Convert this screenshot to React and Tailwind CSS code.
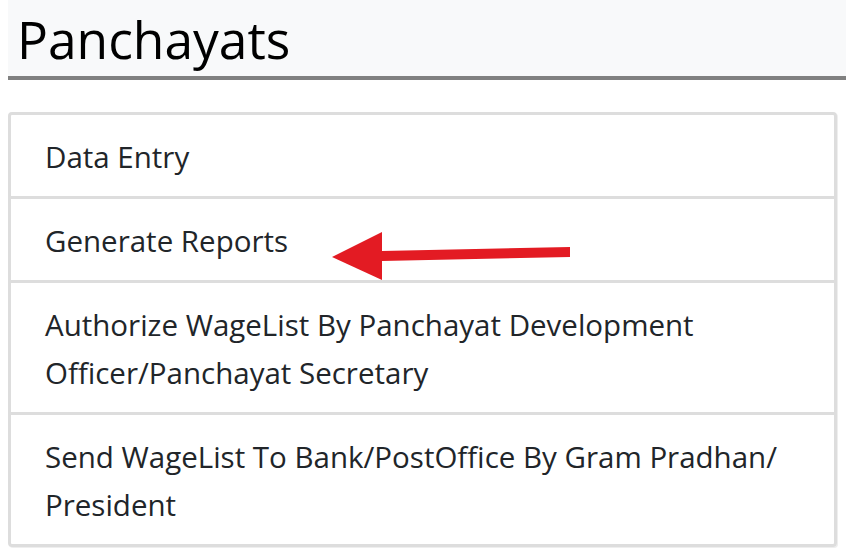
const items = [
  'Data Entry',
  'Generate Reports',
  'Authorize WageList By Panchayat Development Officer/Panchayat Secretary',
  'Send WageList To Bank/PostOffice By Gram Pradhan/ President',
];

const App = () => {
  return (
    <div className="relative min-h-[556px] bg-white pl-2 text-[#212529]" style={{ fontFamily: '"Open Sans", "Noto Sans", sans-serif' }}>
      <div className="h-[80px] bg-[#f8f9fa] border-b-4 border-[#808080] pl-[9px]">
        <h1 className="text-[51.5px] leading-[78px] font-normal text-black">Panchayats</h1>
      </div>

      <ul className="mt-8 mr-[9px] border-[3px] border-[#dddddd] rounded shadow-[1px_1px_0_#eeeeee]">
        {items.map((item, i) => (
          <li
            key={i}
            className={`pt-[18px] pb-[15px] pl-[34px] pr-8 text-[29.5px] leading-[48px] ${i > 0 ? 'border-t-[3px] border-[#dddddd]' : ''}`}
          >
            {item}
          </li>
        ))}
      </ul>

      {/* red pointer arrow */}
      <svg className="absolute left-0 top-0 pointer-events-none" width="846" height="556">
        <polygon points="382,251 570,247 570,257 382,261" fill="#e31b23" />
        <polygon points="332,257 382,232 382,280" fill="#e31b23" />
      </svg>
    </div>
  );
};

export default App;
